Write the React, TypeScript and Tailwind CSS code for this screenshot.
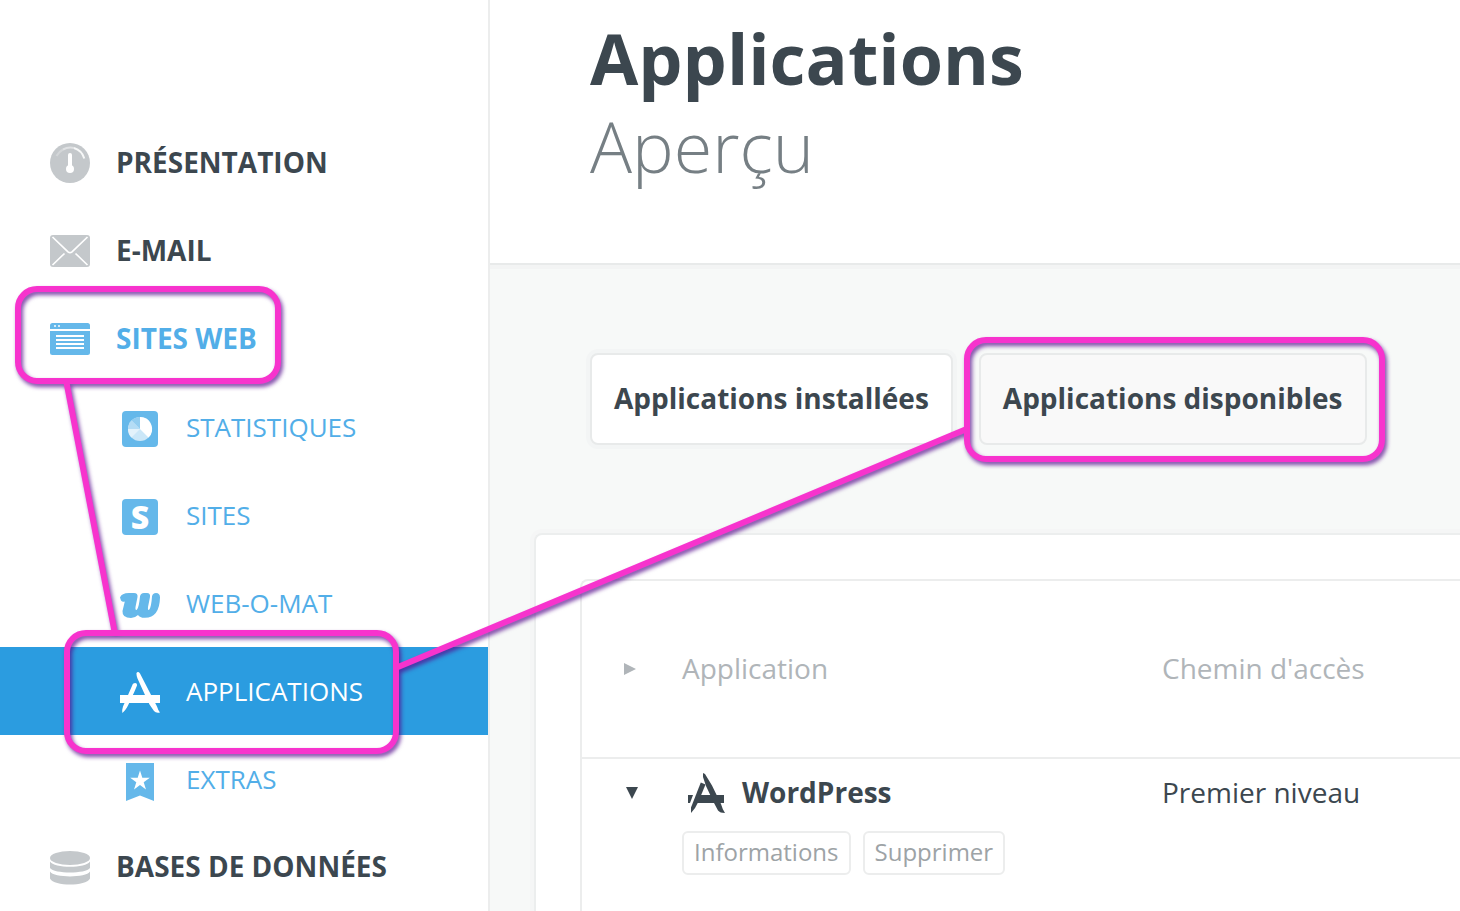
import type { ReactNode } from "react";

type NavItem = { label: string; icon: ReactNode; active?: boolean; tone?: "blue" };

const GaugeIcon = () => (
  <svg width="40" height="40" viewBox="0 0 40 40" aria-hidden="true">
    <circle cx="20" cy="20" r="20" fill="#c4c8cb" />
    <path d="M6.500 13A15.5 15.5 0 0 1 13 6.500" stroke="#d3d6d8" strokeWidth="2" fill="none" />
    <path d="M13 6.500A15.5 15.5 0 0 1 24 5" stroke="#e0e2e4" strokeWidth="2" fill="none" />
    <path d="M24 5A15.5 15.5 0 0 1 34.300 15.500" stroke="#f7f8f8" strokeWidth="2" fill="none" />
    <path d="M20 12V26" stroke="#fff" strokeWidth="4" strokeLinecap="round" />
    <circle cx="20" cy="26" r="4" fill="#fff" />
  </svg>
);

const MailIcon = () => (
  <svg width="40" height="40" viewBox="0 0 40 40" aria-hidden="true">
    <rect y="4" width="40" height="32" rx="3" fill="#c4c8cb" />
    <path d="M2.500 6L18 20.800Q20 22.600 22 20.800L37.500 6M2.500 34L14.500 22.500M37.500 34L25.500 22.500" stroke="#fff" strokeWidth="1.7" fill="none" />
  </svg>
);

const WindowIcon = () => (
  <svg width="40" height="40" viewBox="0 0 40 40" aria-hidden="true">
    <path d="M0 10V6.500Q0 4 2.500 4H37.500Q40 4 40 6.500V10Z" fill="#65b8ea" />
    <path d="M0 12H40V33.500Q40 36 37.500 36H2.500Q0 36 0 33.500Z" fill="#65b8ea" />
    <path d="M4 6h2v2h-2zM8 6h2v2h-2z" fill="#d5ecf9" />
    <path d="M6 17H34M6 21H34M6 25H34M6 29H34" stroke="#fff" strokeWidth="2" />
  </svg>
);

const DatabaseIcon = () => (
  <svg width="40" height="40" viewBox="0 0 40 40" aria-hidden="true">
    <ellipse cx="20" cy="11" rx="20" ry="7" fill="#c4c8cb" />
    <path d="M0 14.500C4 21.500 36 21.500 40 14.500V21C36 27 4 27 0 21Z" fill="#c4c8cb" />
    <path d="M0 24.500C4 31 36 31 40 24.500V31.500C36 39.500 4 39.500 0 31.500Z" fill="#c4c8cb" />
  </svg>
);

const StatsIcon = () => (
  <svg width="40" height="44" viewBox="0 0 40 44" aria-hidden="true">
    <rect x="2" y="6" width="36" height="36" rx="4" fill="#65b8ea" />
    <circle cx="20" cy="24" r="12" fill="#cbe7f8" />
    <path d="M20 24V12A12 12 0 0 1 28.500 32.500Z" fill="#fff" />
    <path d="M20 24L11.500 15.500A12 12 0 0 1 20 12Z" fill="#93cdf0" />
    <path d="M20 24H8A12 12 0 0 1 11.500 15.500Z" fill="#b4dcf5" />
    <path d="M20 24H8A12 12 0 0 0 11.500 32.500Z" fill="#e3f2fb" />
  </svg>
);

const SitesIcon = () => (
  <svg width="40" height="44" viewBox="0 0 40 44" aria-hidden="true">
    <rect x="2" y="6" width="36" height="36" rx="4" fill="#65b8ea" />
    <text x="20" y="35.500" textAnchor="middle" fill="#fff" className="text-[32px] font-extrabold">S</text>
  </svg>
);

const WebomatIcon = () => (
  <svg width="40" height="44" viewBox="0 0 40 44" aria-hidden="true" fill="#65b8ea">
    <path d="M0 16.500Q1.500 12 9 12H14Q18 12 17.500 16L15.500 26Q15 30.500 17 28.500Q19 26 20 15.500Q20.500 12 24 12H27Q30.500 12 30 16L28 26Q27.500 30.500 29.300 28.500Q31.300 26 32 15.500Q32.500 12 36 12Q40 12 40 16.500Q39.500 36.500 25 36.800Q20 37 18 34Q15 37 11 37Q2 37 2.500 30L4.800 20.500Q2.500 21.500 1 19.500Z" />
  </svg>
);

const AppsIcon = () => (
  <svg width="40" height="44" viewBox="0 0 40 44" aria-hidden="true" fill="#fff">
    <path d="M0 26H40V34H0Z" />
    <path d="M12.500 15.800C13 13.500 17.500 13 17 16.500L14.500 22.500L8 36.500C6.500 40 4.500 42 2.300 44Q1.800 41 3 37.500Z" />
    <path d="M16.500 4Q18 1.800 20 4.500L37 37.500Q37.800 40.500 40 43.500Q36 44.500 34 42L29.500 35.500L25 26L17.500 9.500Q16.300 6.500 16.500 4Z" />
  </svg>
);

const ExtrasIcon = () => (
  <svg width="40" height="44" viewBox="0 0 40 44" aria-hidden="true">
    <path d="M6 6H34V44L20 38.500L6 44Z" fill="#65b8ea" />
    <path d="M20 13.500L22.300 20.800H29.800L23.700 25.200L26 32.500L20 28L14 32.500L16.300 25.200L10.200 20.800H17.700Z" fill="#fff" />
  </svg>
);

const WordPressIcon = () => (
  <svg width="36" height="40" viewBox="0 0 36 40" aria-hidden="true" fill="#3c474f" className="overflow-visible">
    <path d="M0 22H5L2 30H0Z" />
    <path d="M10 22H36V30H8Z" />
    <path d="M12.800 9.500L17.500 11.500L10.500 28.500Q7.500 35.500 3 40V34.500Z" />
    <path d="M15 0L17 1L24 12.500L33 31Q34.500 36.500 37 40Q32 40 30 37.500L26 30L18 13L15 4Z" />
  </svg>
);

const topItems: NavItem[] = [
  { label: "PRÉSENTATION", icon: <GaugeIcon /> },
  { label: "E-MAIL", icon: <MailIcon /> },
  { label: "SITES WEB", icon: <WindowIcon />, tone: "blue" },
];

const subItems: NavItem[] = [
  { label: "STATISTIQUES", icon: <StatsIcon /> },
  { label: "SITES", icon: <SitesIcon /> },
  { label: "WEB-O-MAT", icon: <WebomatIcon /> },
  { label: "APPLICATIONS", icon: <AppsIcon />, active: true },
  { label: "EXTRAS", icon: <ExtrasIcon /> },
];

function MainLink({ label, icon, tone }: NavItem) {
  return (
    <a href="#" className={`flex h-[88px] items-center gap-[26px] pl-[50px] text-[28px] font-bold ${tone === "blue" ? "text-[#52aee8]" : "text-[#3c474f]"}`}>
      {icon}
      <span className="pb-0.5">{label}</span>
    </a>
  );
}

function SubLink({ label, icon, active }: NavItem) {
  return (
    <a href="#" className={`flex h-[88px] items-center gap-[26px] pl-[120px] text-[26px] ${active ? "bg-[#2b9ce0] text-white" : "text-[#52aee8]"}`}>
      {icon}
      <span>{label}</span>
    </a>
  );
}

function Annotations() {
  return (
    <svg
      className="pointer-events-none absolute top-0 left-0 drop-shadow-[2px_3px_2px_rgba(84,10,140,0.75)]"
      width="1400"
      height="780"
      viewBox="0 0 1400 780"
      fill="none"
      stroke="#f733cd"
      strokeWidth="6"
      aria-hidden="true"
    >
      <path d="M66 380L115 634M398 667L969 428" />
      <rect x="18" y="289" width="260" height="92" rx="19" />
      <rect x="67" y="633" width="329" height="118" rx="19" />
      <rect x="967" y="340" width="415" height="119" rx="19" />
    </svg>
  );
}

export default function App() {
  return (
    <div className="relative flex min-h-screen overflow-hidden bg-white font-['Open_Sans',sans-serif] text-[#3c474f]">
      <aside className="w-[490px] shrink-0 border-r-2 border-[#eceded] pt-[119px]">
        <nav>
          {topItems.map((item) => <MainLink key={item.label} {...item} />)}
          {subItems.map((item) => <SubLink key={item.label} {...item} />)}
          <MainLink label="BASES DE DONNÉES" icon={<DatabaseIcon />} />
        </nav>
      </aside>

      <main className="flex min-w-0 flex-1 flex-col bg-[#f7f9f8]">
        <header className="h-[265px] border-b-2 border-[#e8eaea] bg-white pt-3.5 pl-[100px] shadow-[0_4px_0_#f3f4f4]">
          <h1 className="text-[70px] leading-[88px] font-bold">Applications</h1>
          <p className="text-[70px] leading-[88px] font-light text-[#767f84]">Aperçu</p>
        </header>

        <div className="flex gap-[26px] pt-[88px] pl-[100px] whitespace-nowrap">
          <button type="button" className="h-[92px] rounded-lg border-2 border-[#e8eaea] bg-white px-[22px] pb-0.5 text-[28px] font-bold shadow-[0_0_0_4px_#f3f5f5]">
            Applications installées
          </button>
          <button type="button" className="h-[92px] rounded-lg border-2 border-[#e8eaea] bg-[#f9f9f9] px-[22px] pb-0.5 text-[28px] font-bold">
            Applications disponibles
          </button>
        </div>

        <section className="mt-[88px] ml-[44px] flex flex-1 flex-col rounded-tl-lg border-t-2 border-l-2 border-[#eceeee] bg-white pt-[44px] pl-[44px] shadow-[0_0_0_4px_#f5f6f6]">
          <div className="flex-1 rounded-tl-lg border-t-2 border-l-2 border-[#eceded]">
            <table className="w-full table-fixed text-left text-[28px]">
              <thead>
                <tr className="h-[177px] border-b-2 border-[#eceded] text-[#b0b5b9]">
                  <th className="w-[100px] pl-[42px]">
                    <svg width="12" height="12" viewBox="0 0 12 12" fill="#b0b5b9" role="img" aria-label="Tout déplier">
                      <path d="M0 0L12 6L0 12Z" />
                    </svg>
                  </th>
                  <th className="w-[480px] pb-0.5 font-normal">Application</th>
                  <th className="pb-0.5 font-normal">Chemin d'accès</th>
                </tr>
              </thead>
              <tbody>
                <tr className="align-top">
                  <td className="pl-[44px]">
                    <button type="button" aria-label="Replier WordPress" className="flex h-[68px] items-center">
                      <svg width="12" height="12" viewBox="0 0 12 12" fill="#3c474f" aria-hidden="true">
                        <path d="M0 0H12L6 12Z" />
                      </svg>
                    </button>
                  </td>
                  <td>
                    <div className="flex h-[68px] items-center gap-[18px] pl-1.5 font-bold">
                      <WordPressIcon />
                      <span className="pb-0.5">WordPress</span>
                    </div>
                    <div className="flex gap-3 pt-1 text-2xl text-[#9da3a6]">
                      <button type="button" className="flex h-11 items-center rounded-md border-2 border-[#eceded] px-2.5 pb-0.5">Informations</button>
                      <button type="button" className="flex h-11 items-center rounded-md border-2 border-[#eceded] px-2.5 pb-0.5">Supprimer</button>
                    </div>
                  </td>
                  <td className="leading-[66px]">Premier niveau</td>
                </tr>
              </tbody>
            </table>
          </div>
        </section>
      </main>

      <Annotations />
    </div>
  );
}
